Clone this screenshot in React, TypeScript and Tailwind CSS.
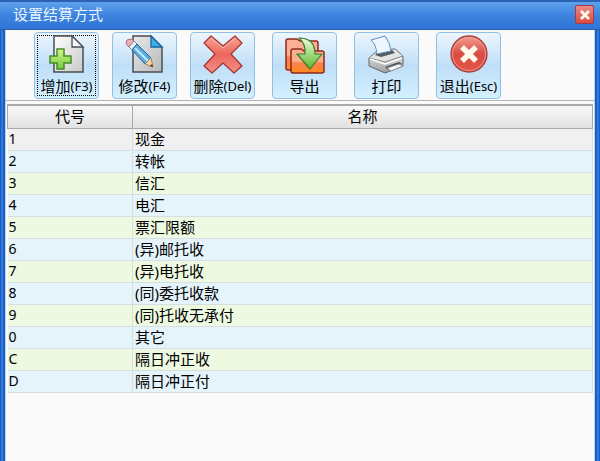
import clsx from 'clsx';
import React from 'react';

type Method = {
  code: string;
  name: string;
};

const methods: Method[] = [
  { code: '1', name: '现金' },
  { code: '2', name: '转帐' },
  { code: '3', name: '信汇' },
  { code: '4', name: '电汇' },
  { code: '5', name: '票汇限额' },
  { code: '6', name: '(异)邮托收' },
  { code: '7', name: '(异)电托收' },
  { code: '8', name: '(同)委托收款' },
  { code: '9', name: '(同)托收无承付' },
  { code: '0', name: '其它' },
  { code: 'C', name: '隔日冲正收' },
  { code: 'D', name: '隔日冲正付' },
];

const rowColor = (index: number) => {
  if (index === 0) return 'bg-[#f0f0f0]';
  return index % 2 ? 'bg-[#e5f3fb]' : 'bg-[#edf9e1]';
};

export default function App() {
  return (
    <div
      className={clsx(
        'flex flex-col min-h-screen text-[15px] leading-[21px] text-black bg-[#2f7bdc]',
        "font-['Noto_Sans','Noto_Sans_CJK_SC',sans-serif]"
      )}
    >
      <TitleBar title="设置结算方式" />

      <div className="flex-1 flex flex-col px-[2px] border-x border-[#1f5cba]">
        <main
          className={clsx(
            'flex-1 flex flex-col bg-[#fafafa] border-x-2 border-[#1c5fc9]',
            'shadow-[inset_1px_0_#b5d3ee,inset_-1px_0_#b5d3ee]'
          )}
        >
          <Toolbar />
          <MethodTable />
        </main>
      </div>
    </div>
  );
}

const TitleBar = ({ title }: { title: string }) => {
  return (
    <header
      className={clsx(
        'h-[30px] pl-[13px] pr-[6px] pb-[2px] flex items-center justify-between',
        'border-t-2 border-b border-t-[#2c62b4] border-b-[#2b5fa9]',
        'bg-linear-to-b from-[#5ea1ee] via-[#3d83dd] to-[#2f74d8]'
      )}
    >
      <h1 className="text-[#eaf4ff]">{title}</h1>
      <button
        type="button"
        aria-label="关闭"
        className={clsx(
          'grid place-items-center w-[19px] h-[19px] rounded-xs border border-[#a43b4c]',
          'bg-linear-to-b from-[#e98a86] to-[#d84a42]'
        )}
      >
        <svg viewBox="0 0 12 12" className="w-3 h-3" fill="none">
          <path d="M2 2l8 8M10 2l-8 8" stroke="#fff8ea" strokeWidth="2.8" />
        </svg>
      </button>
    </header>
  );
};

const Toolbar = () => {
  return (
    <div className="h-[71px] pl-[29px] pt-[2px] flex gap-[17px] border-b border-[#b4b4b4]">
      <div className="flex gap-[13px]">
        <ToolButton label="增加" shortcut="(F3)" icon={<AddIcon />} focused />
        <ToolButton label="修改" shortcut="(F4)" icon={<EditIcon />} />
        <ToolButton label="删除" shortcut="(Del)" icon={<DeleteIcon />} />
      </div>
      <ToolButton label="导出" icon={<ExportIcon />} />
      <ToolButton label="打印" icon={<PrintIcon />} />
      <ToolButton label="退出" shortcut="(Esc)" icon={<ExitIcon />} />
    </div>
  );
};

type ToolButtonProps = {
  label: string;
  shortcut?: string;
  icon: React.ReactNode;
  focused?: boolean;
};

const ToolButton = ({ label, shortcut, icon, focused }: ToolButtonProps) => {
  return (
    <button
      type="button"
      className={clsx(
        'w-[65px] h-[67px] p-[2px] rounded-sm border border-[#93bfe4]',
        'bg-linear-to-b from-[#edf6fd] via-[#bfdff8] to-[#d3f0fe]'
      )}
    >
      <span
        className={clsx(
          'flex flex-col items-center h-full border border-dotted',
          focused ? 'border-black' : 'border-transparent'
        )}
      >
        {icon}
        <span className="flex items-center justify-center h-[21px] whitespace-nowrap">
          {label}
          {shortcut ? <span className="text-[13px]">{shortcut}</span> : null}
        </span>
      </span>
    </button>
  );
};

const MethodTable = () => {
  return (
    <div className="flex-1 mt-[3px] mx-[2px] border-t-2 border-[#a9a9a9]">
      <table className="w-full table-fixed border-collapse">
        <thead>
          <tr className="h-[22px] bg-linear-to-b from-[#f8f8f8] to-[#e2e2e2]">
            <th
              scope="col"
              className="w-[125px] p-0 font-normal border-r border-b border-l border-[#a9a9a9]"
            >
              代号
            </th>
            <th scope="col" className="p-0 font-normal border-r border-b border-[#a9a9a9]">
              名称
            </th>
          </tr>
        </thead>
        <tbody className="leading-5">
          {methods.map((method, index) => (
            <tr key={method.code} className={clsx('h-[22px]', rowColor(index))}>
              <td className="py-0 px-px text-sm leading-5 border-b border-r border-[#d5dfe2]">
                {method.code}
              </td>
              <td className="py-0 px-[2px] border-b border-r border-[#d5dfe2]">{method.name}</td>
            </tr>
          ))}
        </tbody>
      </table>
    </div>
  );
};

const AddIcon = () => {
  return (
    <svg viewBox="0 0 40 40" className="w-10 h-10 shrink-0 overflow-visible" fill="none">
      <defs>
        <linearGradient id="add-page" x1="0" y1="0" x2="1" y2="1">
          <stop stopColor="#ffffff" />
          <stop offset="1" stopColor="#c9c9c9" />
        </linearGradient>
        <linearGradient id="add-plus" x1="0" y1="0" x2="0" y2="1">
          <stop stopColor="#d0f58d" />
          <stop offset="1" stopColor="#72c936" />
        </linearGradient>
      </defs>
      <path d="M7 0H25L36 11V36H7Z" fill="url(#add-page)" stroke="#4a4e52" strokeWidth="1.5" />
      <path d="M25 0V11H36Z" fill="#f5f7f8" stroke="#4a4e52" strokeWidth="1.3" />
      <path
        d="M10 13h7v7h7v7h-7v6h-7v-6H3v-7h7z"
        fill="url(#add-plus)"
        stroke="#468c2c"
        strokeWidth="1.5"
      />
    </svg>
  );
};

const EditIcon = () => {
  return (
    <svg viewBox="0 0 40 40" className="w-10 h-10 shrink-0 overflow-visible" fill="none">
      <defs>
        <linearGradient id="edit-page" x1="0" y1="0" x2="1" y2="1">
          <stop stopColor="#e8e8e8" />
          <stop offset="1" stopColor="#b7b9bb" />
        </linearGradient>
      </defs>
      <path d="M8 0H26L37 11V36H8Z" fill="url(#edit-page)" stroke="#4a4e52" strokeWidth="1.5" />
      <path d="M26 0V11H37Z" fill="#39aee8" stroke="#17679d" strokeWidth="1.3" />
      <path d="M1 7Q1 3 5 3Q7 3 9 5L4 11Q1 9 1 7Z" fill="#efadb4" stroke="#a9707c" />
      <path d="M4 11L9 5L12 8L7 14Z" fill="#edf3f6" stroke="#7c8ea0" />
      <path d="M7 14L12 8L26 22L20 28Z" fill="#56ade5" stroke="#315f91" />
      <path d="M10 12L23 25" stroke="#c5e8fb" strokeWidth="2" />
      <path d="M20 28L26 22L28 31Z" fill="#f5d5a2" stroke="#a5845a" />
      <path d="M25 30L27 28L28 31Z" fill="#3c3029" />
    </svg>
  );
};

const DeleteIcon = () => {
  return (
    <svg viewBox="0 0 40 40" className="w-10 h-10 shrink-0 overflow-visible" fill="none">
      <defs>
        <linearGradient id="delete-cross" x1="0" y1="0" x2="0" y2="1">
          <stop stopColor="#f7a494" />
          <stop offset="0.5" stopColor="#ee665c" />
          <stop offset="1" stopColor="#ef9288" />
        </linearGradient>
      </defs>
      <path
        d="M8 0L20 10L32 0L39 7L28 18L39 30L31 37L20 27L9 37L1 30L12 18L1 7Z"
        fill="url(#delete-cross)"
        stroke="#a93532"
        strokeWidth="1.3"
        strokeLinejoin="round"
      />
      <path d="M8 2L20 12L32 2" stroke="#fbc0b4" strokeWidth="1" />
    </svg>
  );
};

const ExportIcon = () => {
  return (
    <svg viewBox="0 0 40 40" className="w-10 h-10 shrink-0 overflow-visible" fill="none">
      <defs>
        <linearGradient id="export-folder" x1="0" y1="0" x2="0" y2="1">
          <stop stopColor="#fcae98" />
          <stop offset="0.5" stopColor="#fbb08c" />
          <stop offset="0.6" stopColor="#f9804c" />
          <stop offset="1" stopColor="#ff8a1d" />
        </linearGradient>
        <linearGradient id="export-arrow" x1="0" y1="0" x2="0" y2="1">
          <stop stopColor="#effbdc" />
          <stop offset="1" stopColor="#5cb92b" />
        </linearGradient>
      </defs>
      <path
        d="M1 32V5Q1 3 3 3H12L15 5H31Q33 5 33 7V32Q33 34 31 34H3Q1 34 1 32Z"
        fill="url(#export-folder)"
        stroke="#8d281b"
        strokeWidth="1.5"
      />
      <path
        d="M6 35V15Q6 13 8 13H16L19 15H37Q39 15 39 17V35Q39 37 37 37H8Q6 37 6 35Z"
        fill="url(#export-folder)"
        stroke="#8d281b"
        strokeWidth="1.5"
      />
      <path
        d="M14 2Q30 2 30 18H37L25 33L12 18H20Q21 8 14 2Z"
        fill="url(#export-arrow)"
        stroke="#397d28"
        strokeWidth="1.2"
        strokeLinejoin="round"
      />
    </svg>
  );
};

const PrintIcon = () => {
  return (
    <svg viewBox="0 0 40 40" className="w-10 h-10 shrink-0 overflow-visible" fill="none">
      <defs>
        <linearGradient id="print-body" x1="0" y1="0" x2="0" y2="1">
          <stop stopColor="#f4f4f2" />
          <stop offset="1" stopColor="#9c9ea0" />
        </linearGradient>
      </defs>
      <path
        d="M2 22L10 15L28 13L36 20V30L18 37L2 30Z"
        fill="url(#print-body)"
        stroke="#62666a"
        strokeLinejoin="round"
      />
      <path d="M2 22L10 15L28 13L36 20L18 26Z" fill="#e4e4e2" stroke="#85888a" />
      <path d="M8 19L11 16L25 14L28 17L14 21Z" fill="#555b60" />
      <path d="M4 4L18 0Q23 6 24 15L10 18Q9 8 4 4Z" fill="#edf6fe" stroke="#5f90bd" />
      <path d="M3 23L18 28L35 22" stroke="#ffffff" strokeWidth="1.5" />
      <path d="M18 31L32 26L35 28L21 34Z" fill="#4b5055" />
      <path d="M20 32L32 28L36 30L24 35Z" fill="#f8f8f8" stroke="#8a8e92" />
    </svg>
  );
};

const ExitIcon = () => {
  return (
    <svg viewBox="0 0 40 40" className="w-10 h-10 shrink-0 overflow-visible" fill="none">
      <defs>
        <linearGradient id="exit-disc" x1="0" y1="0" x2="0" y2="1">
          <stop stopColor="#f2a093" />
          <stop offset="0.5" stopColor="#da4c42" />
          <stop offset="1" stopColor="#e45548" />
        </linearGradient>
      </defs>
      <circle cx="20" cy="18" r="18" fill="url(#exit-disc)" stroke="#a84340" strokeWidth="1.3" />
      <circle cx="20" cy="18" r="16.5" stroke="#f3a498" strokeWidth="0.8" />
      <path d="M13 11L27 25M27 11L13 25" stroke="#fff9ee" strokeWidth="5.5" />
    </svg>
  );
};
